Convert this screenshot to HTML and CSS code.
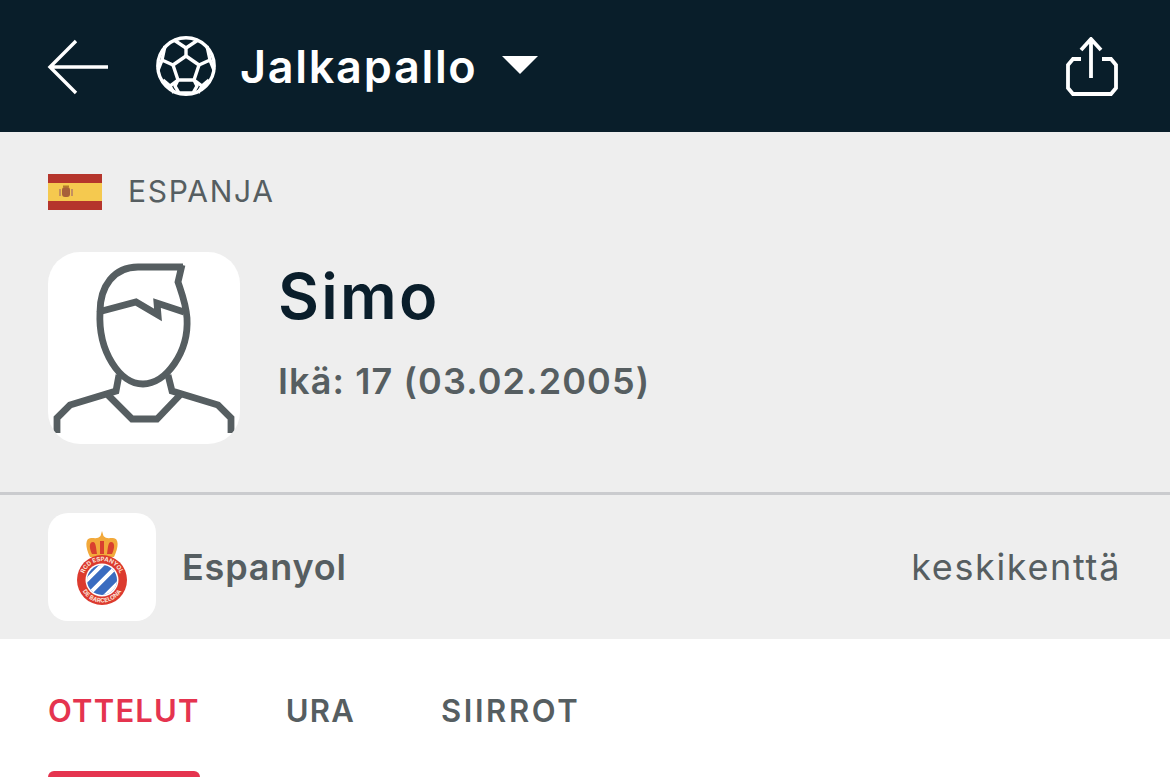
FILE: index.html
```html
<!DOCTYPE html>
<html lang="fi">
<head>
<meta charset="utf-8">
<title>Simo</title>
<link rel="stylesheet" href="styles.css">
</head>
<body>
<header class="topbar">
  <svg class="back" width="62" height="56" viewBox="0 0 62 56"><path d="M29 2 3 28l26 26M3 28h58" fill="none" stroke="#fff" stroke-width="3.4"/></svg>
  <svg class="ball" width="60" height="60" viewBox="0 0 60 60">
    <g fill="none" stroke="#fff" stroke-width="3.4" stroke-linejoin="round">
      <circle cx="30" cy="30" r="28.2"/>
      <path d="M30 20 43 29 38 44H22L17 29Z"/>
      <path d="M30 20V12L18 4M30 12 42 4M43 29 54 24 51 10M54 24 58 34M17 29 6 24 9 10M6 24 2 34M38 44 46 50 42 57M46 50 53 44M22 44 14 50 18 57M14 50 7 44M22 44 19 50 23 57H37L41 50 38 44"/>
    </g>
  </svg>
  <span class="sport">Jalkapallo</span>
  <svg class="caret" width="36" height="18" viewBox="0 0 36 18"><path d="M0 0h36L18 18Z" fill="#fff"/></svg>
  <svg class="share" width="52" height="60" viewBox="0 0 52 60"><path d="M25 41V3M15 13 25 2l10 11M15 22H7l-5 6v23l5 6h38l5-6V28l-5-6h-9" fill="none" stroke="#fff" stroke-width="3.800"/></svg>
</header>

<section class="profile">
  <div class="country">
    <svg width="54" height="36" viewBox="0 0 54 36">
      <rect width="54" height="36" fill="#b5352c"/>
      <rect y="9" width="54" height="18" fill="#f5c94f"/>
      <rect x="14" y="13" width="8" height="10" rx="3" fill="#a8603a"/>
      <rect x="11" y="15" width="2" height="7" fill="#c49060"/>
      <rect x="23" y="15" width="2" height="7" fill="#c49060"/>
      <rect x="15" y="11.500" width="6" height="2" fill="#b5782c"/>
    </svg>
    <span>ESPANJA</span>
  </div>
  <div class="person">
    <svg class="avatar" width="192" height="192" viewBox="0 0 192 192">
      <g fill="none" stroke="#565e61" stroke-width="6.800">
        <path d="M135 15H90C66 15 52 34 52 60 50 100 72 132 95 132 118 132 141 100 139 66 138 52 134 42 130 30L134 13"/>
        <path d="M54 59 88 50 110 63 109 51 136 60"/>
        <path d="M71 123 68 139 22 153 9 166V181M120 123 124 139 170 153 183 166V181"/>
        <path d="M60 143 84 167H109L132 143"/>
      </g>
    </svg>
    <div class="person-text">
      <h1>Simo</h1>
      <p>Ikä: 17 (03.02.2005)</p>
    </div>
  </div>
</section>

<section class="club">
  <div class="club-logo">
    <svg width="108" height="108" viewBox="0 0 108 108">
      <path d="M42 44C37 34 37 25 43 25 47 25 50 26 52.500 23L54 18 55.500 23C58 26 61 25 65 25 71 25 71 34 66 44Z" fill="#f2a93b"/>
      <path d="M44 41C41 35 41 29 45 29 48 29 48 35 49 41ZM52 41V28H56V41ZM59 41C60 35 60 29 63 29 67 29 67 35 64 41Z" fill="#d9402f"/>
      <circle cx="54" cy="67" r="25" fill="#dc3a2e"/>
      <circle cx="54" cy="67" r="16.500" fill="#fff"/>
      <clipPath id="inner"><circle cx="54" cy="67" r="15"/></clipPath>
      <g clip-path="url(#inner)">
        <rect x="38" y="51" width="32" height="32" fill="#3a6cc0"/>
        <path d="M32 74 62 44M37 85 75 47M50 90 80 60" stroke="#fff" stroke-width="4"/>
      </g>
      <path id="arc-top" d="M35 67A19 19 0 0 1 73 67" fill="none"/>
      <path id="arc-bottom" d="M31.500 67A22.500 22.500 0 0 0 76.500 67" fill="none"/>
      <text class="crest-text"><textPath href="#arc-top" startOffset="50%" text-anchor="middle">RCD ESPANYOL</textPath></text>
      <text class="crest-text"><textPath href="#arc-bottom" startOffset="50%" text-anchor="middle">DE BARCELONA</textPath></text>
    </svg>
  </div>
  <span class="club-name">Espanyol</span>
  <span class="position">keskikenttä</span>
</section>

<nav class="tabs">
  <div class="tab active">OTTELUT</div>
  <div class="tab">URA</div>
  <div class="tab tab-wide">SIIRROT</div>
</nav>
</body>
</html>
```
FILE: styles.css
```css
* { box-sizing: border-box; }
html, body { margin: 0; padding: 0; }
body {
  width: 1170px;
  height: 777px;
  overflow: hidden;
  background: #fff;
  font-family: Inter, "Liberation Sans", sans-serif;
  color: #565e61;
}
.topbar {
  height: 132px;
  background: #091e2a;
  display: flex;
  align-items: center;
  padding: 0 52px 0 47px;
}
.back { margin-top: 2px; }
.ball { margin-left: 47px; }
.sport {
  margin-left: 24px;
  font-size: 45px;
  font-weight: 600;
  color: #fff;
  letter-spacing: 1.700px;
}
.caret { margin-left: 25px; margin-top: -2px; }
.share { margin-left: auto; margin-top: 2px; }
.profile {
  height: 363px;
  background: #eeeeee;
  border-bottom: 3px solid #cacbce;
  padding: 42px 48px 0;
}
.country {
  display: flex;
  align-items: center;
  gap: 26px;
  font-size: 30px;
  letter-spacing: 1.700px;
  height: 36px;
}
.country span { margin-top: -2px; }
.person {
  display: flex;
  margin-top: 42px;
  gap: 38px;
}
.avatar {
  background: #fff;
  border-radius: 32px;
  display: block;
}
.person-text h1 {
  margin: 7px 0 0;
  font-size: 63px;
  line-height: 74px;
  font-weight: 600;
  letter-spacing: 2.300px;
  color: #0a1e2b;
}
.person-text p {
  margin: 26px 0 0;
  font-size: 36px;
  line-height: 44px;
  font-weight: 600;
  letter-spacing: 1.100px;
}
.club {
  height: 144px;
  background: #eeeeee;
  display: flex;
  align-items: center;
  padding: 0 49px 0 48px;
}
.club-logo {
  width: 108px;
  height: 108px;
  background: #fff;
  border-radius: 20px;
  margin-top: -1px;
}
.club-logo svg { display: block; }
.crest-text {
  font-size: 6px;
  font-weight: 700;
  fill: #fbe3d8;
}
.club-name {
  margin-left: 26px;
  font-size: 36px;
  font-weight: 600;
  letter-spacing: 0.800px;
}
.position {
  margin-left: auto;
  font-size: 36px;
  letter-spacing: 1.650px;
}
.tabs {
  display: flex;
  gap: 86px;
  padding: 0 48px;
  background: #fff;
  height: 138px;
  overflow: hidden;
}
.tab {
  font-size: 31px;
  font-weight: 600;
  letter-spacing: 1.200px;
  padding-top: 53px;
  height: 138px;
  position: relative;
}
.tab-wide { letter-spacing: 2.600px; }
.tab.active { color: #e5344f; }
.tab.active::after {
  content: "";
  position: absolute;
  left: 0;
  right: 0;
  top: 132px;
  height: 6px;
  background: #e5344f;
  border-radius: 6px 6px 0 0;
}
```
